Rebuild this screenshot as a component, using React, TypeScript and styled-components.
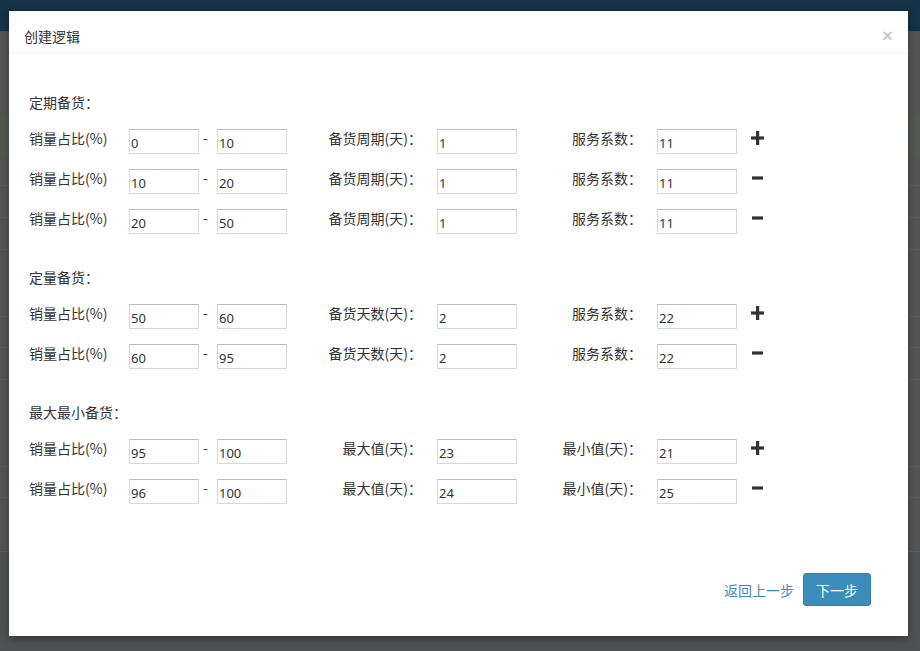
import React from "react";
import styled, { createGlobalStyle } from "styled-components";

const Global = createGlobalStyle`
  html, body { margin: 0; padding: 0; }
  body {
    width: 920px; height: 651px; overflow: hidden;
    font-family: "Noto Sans CJK SC", "Noto Sans", sans-serif;
    background: #545454;
  }
  * { box-sizing: border-box; }
`;

const Page = styled.div`
  position: relative;
  width: 920px;
  height: 651px;
  background: #555555;
  display: flex;
  flex-direction: column;
`;

const TopBar = styled.div`
  height: 31px;
  background: #163246;
  flex: none;
`;

const BackRow = styled.div<{ $h: number; $bg?: string; $line?: boolean }>`
  height: ${(p) => p.$h}px;
  flex: none;
  background: ${(p) => p.$bg || "transparent"};
  border-bottom: ${(p) => (p.$line ? "1px solid #5e5e5e" : "none")};
`;

const BackFill = styled.div`
  flex: 1;
  background: #505152;
`;

const Modal = styled.div`
  position: absolute;
  left: 9px;
  top: 11px;
  width: 899px;
  height: 625px;
  background: #fff;
  box-shadow: 0 3px 9px rgba(0, 0, 0, 0.35);
  display: flex;
  flex-direction: column;
  color: #333;
`;

const Header = styled.div`
  display: flex;
  align-items: center;
  justify-content: space-between;
  padding: 15px 15px 6px 15px;
  border-bottom: 1px solid #f4f4f4;
`;

const Title = styled.div`
  font-size: 14px;
  line-height: 20px;
  color: #333;
`;

const Close = styled.span`
  font-family: "Liberation Sans", Arial, sans-serif;
  font-size: 19px;
  font-weight: bold;
  line-height: 20px;
  color: #000;
  opacity: 0.2;
  margin-top: 0px;
`;

const Body = styled.div`
  padding: 39px 20px 0 20px;
  display: flex;
  flex-direction: column;
  gap: 33px;
`;

const Section = styled.div`
  display: flex;
  flex-direction: column;
`;

const SectionTitle = styled.div`
  font-size: 14px;
  line-height: 20px;
  margin-bottom: 17px;
`;

const Rows = styled.div`
  display: flex;
  flex-direction: column;
  gap: 15px;
`;

const Row = styled.div`
  display: grid;
  grid-template-columns: 100px 70px 18px 70px 150px 80px 140px 80px 40px;
  height: 25px;
  align-items: start;
`;

const Label = styled.div<{ $right?: boolean }>`
  font-size: 14px;
  line-height: 20px;
  white-space: nowrap;
  text-align: ${(p) => (p.$right ? "right" : "left")};
  padding-right: ${(p) => (p.$right ? "15px" : "0")};
  margin-top: -1px;
`;

const Dash = styled.div`
  font-size: 14px;
  line-height: 20px;
  padding-left: 4px;
  margin-top: -2px;
  color: #333;
`;

const Input = styled.input`
  width: 100%;
  height: 25px;
  border: 1px solid #d5d8dd;
  border-top-color: #b9bcc1;
  border-radius: 1px;
  padding: 3px 1px 0 1px;
  font-family: "Noto Sans", "Open Sans", sans-serif;
  font-size: 13px;
  color: #333;
  background: #fff;
  outline: none;
`;

const IconBtn = styled.div`
  padding-left: 14px;
  padding-top: 2px;
  color: #333;
  line-height: 0;
`;

const Footer = styled.div`
  margin-top: auto;
  display: flex;
  justify-content: flex-end;
  align-items: center;
  gap: 9px;
  padding: 0 37px 30px 0;
`;

const LinkBtn = styled.span`
  font-size: 14px;
  line-height: 20px;
  color: #3c8dbc;
`;

const PrimaryBtn = styled.button`
  height: 33px;
  width: 68px;
  padding: 0;
  background: #3c8dbc;
  border: 1px solid #367fa9;
  border-radius: 3px;
  color: #fff;
  font-family: "Noto Sans CJK SC", sans-serif;
  font-size: 14px;
  line-height: 20px;
`;

const Plus = () => (
  <svg width="13" height="14" viewBox="0 0 13 14">
    <rect x="5" y="0" width="3.2" height="14" fill="#333" />
    <rect x="0" y="5.4" width="13" height="3.2" fill="#333" />
  </svg>
);

const Minus = () => (
  <svg width="13" height="14" viewBox="0 0 13 14">
    <rect x="1" y="5.4" width="11" height="3.2" fill="#333" />
  </svg>
);

type RowData = { a: string; b: string; c: string; d: string; plus: boolean };
type SectionData = { title: string; l2: string; l3: string; rows: RowData[] };

const sections: SectionData[] = [
  {
    title: "定期备货：",
    l2: "备货周期(天)：",
    l3: "服务系数：",
    rows: [
      { a: "0", b: "10", c: "1", d: "11", plus: true },
      { a: "10", b: "20", c: "1", d: "11", plus: false },
      { a: "20", b: "50", c: "1", d: "11", plus: false },
    ],
  },
  {
    title: "定量备货：",
    l2: "备货天数(天)：",
    l3: "服务系数：",
    rows: [
      { a: "50", b: "60", c: "2", d: "22", plus: true },
      { a: "60", b: "95", c: "2", d: "22", plus: false },
    ],
  },
  {
    title: "最大最小备货：",
    l2: "最大值(天)：",
    l3: "最小值(天)：",
    rows: [
      { a: "95", b: "100", c: "23", d: "21", plus: true },
      { a: "96", b: "100", c: "24", d: "25", plus: false },
    ],
  },
];

export default function App() {
  return (
    <>
      <Global />
      <Page>
        <TopBar />
        <BackRow $h={84} />
        <BackRow $h={40} $bg="#535a50" />
        <BackRow $h={31} $line />
        <BackRow $h={32} $line />
        <BackRow $h={32} $line />
        <BackRow $h={67} $line />
        <BackRow $h={31} $line />
        <BackRow $h={32} $line />
        <BackRow $h={87} $line />
        <BackRow $h={31} $line />
        <BackRow $h={54} $line />
        <BackFill />
        <Modal>
          <Header>
            <Title>创建逻辑</Title>
            <Close>×</Close>
          </Header>
          <Body>
            {sections.map((s) => (
              <Section key={s.title}>
                <SectionTitle>{s.title}</SectionTitle>
                <Rows>
                  {s.rows.map((r, i) => (
                    <Row key={i}>
                      <Label>销量占比(%)</Label>
                      <Input defaultValue={r.a} />
                      <Dash>-</Dash>
                      <Input defaultValue={r.b} />
                      <Label $right>{s.l2}</Label>
                      <Input defaultValue={r.c} />
                      <Label $right>{s.l3}</Label>
                      <Input defaultValue={r.d} />
                      <IconBtn>{r.plus ? <Plus /> : <Minus />}</IconBtn>
                    </Row>
                  ))}
                </Rows>
              </Section>
            ))}
          </Body>
          <Footer>
            <LinkBtn>返回上一步</LinkBtn>
            <PrimaryBtn>下一步</PrimaryBtn>
          </Footer>
        </Modal>
      </Page>
    </>
  );
}
